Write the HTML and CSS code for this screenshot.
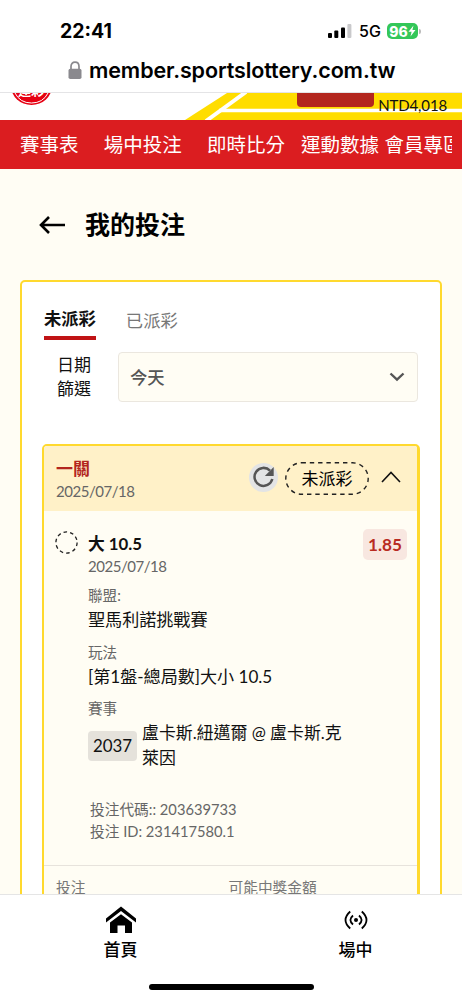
FILE: index.html
```html
<!DOCTYPE html>
<html lang="zh-Hant">
<head>
<meta charset="utf-8">
<meta name="viewport" content="width=device-width, initial-scale=1">
<title>我的投注</title>
<link rel="stylesheet" href="styles.css">
</head>
<body>
<div class="phone">
  <header class="browser">
    <div class="status">
      <span class="time">22:41</span>
      <span class="status-right">
        <svg class="signal" width="24" height="15" viewBox="0 0 24 15"><rect x="0" y="9" width="4" height="5" rx="1"/><rect x="6.3" y="6.5" width="4" height="7.5" rx="1"/><rect x="13" y="3.5" width="4" height="10.500" rx="1"/><rect x="19.400" y="0" width="4" height="14" rx="1" fill="#c9c9cb"/></svg>
        <span class="net">5G</span>
        <span class="battery">96<svg width="8" height="12" viewBox="0 0 8 12"><path d="M5.500 0.500L0.500 6.800H3.600L2.500 11.500L7.500 5H4.400Z" fill="#fff"/></svg></span>
        <span class="battery-tip"></span>
      </span>
    </div>
    <div class="address">
      <svg width="14" height="19" viewBox="0 0 14 19"><path d="M3 9V5.500C3 2.800 4.600 1.200 7 1.200S11 2.800 11 5.500V9" fill="none" stroke="#8a898e" stroke-width="1.700"/><rect x="0.500" y="7.800" width="13" height="10.200" rx="1.800" fill="#8a898e"/></svg>
      <span>member.sportslottery.com.tw</span>
    </div>
  </header>

  <div class="banner">
    <svg class="banner-art" width="462" height="27" viewBox="0 0 462 27">
      <path d="M227 0H462V27H185Z" fill="#ffdd00"/>
      <path d="M246 -1L206 28" stroke="#fff" stroke-width="4"/>
      <path d="M219 17.500H462" stroke="#fff" stroke-width="3.500"/>
      <path d="M297 0H374V10Q374 14 370 14H301Q297 14 297 10Z" fill="#b3261e"/>
      <ellipse cx="31.500" cy="-7" rx="20.500" ry="19" fill="#e60012"/>
      <path d="M15 0Q20 10 31.500 10Q43 10 48 0" fill="none" stroke="#fff" stroke-width="1"/>
    </svg>
    <span class="logo-text">運彩</span>
    <span class="balance">NTD4,018</span>
  </div>

  <nav class="nav"><span>賽事表</span><span>場中投注</span><span>即時比分</span><span>運動數據</span><span>會員專區</span></nav>

  <main class="page">
    <div class="title-row">
      <svg width="28" height="20" viewBox="0 0 28 20"><path d="M26 10H2.500M10 2L2 10L10 18" fill="none" stroke="#000" stroke-width="2.600"/></svg>
      <h1>我的投注</h1>
    </div>

    <section class="panel">
      <div class="tabs"><span class="tab active">未派彩</span><span class="tab">已派彩</span></div>
      <div class="filter">
        <div class="filter-label">日期<br>篩選</div>
        <div class="select"><span>今天</span><svg width="16" height="10" viewBox="0 0 16 10"><path d="M1.500 1.500L8 7.700L14.500 1.500" fill="none" stroke="#555" stroke-width="2.400"/></svg></div>
      </div>

      <article class="ticket">
        <div class="ticket-head">
          <div class="ticket-name"><strong>一關</strong><span class="day">2025/07/18</span></div>
          <span class="refresh"><svg width="22" height="22" viewBox="0 0 22 22"><path d="M19.300 13A9 9 0 1 1 17 4.600" fill="none" stroke="#555" stroke-width="2.500"/><path d="M20.700 1V10H11.800Z" fill="#555"/></svg></span>
          <svg class="pill" width="84" height="33" viewBox="0 0 84 33"><rect x="0.800" y="0.800" width="82.400" height="31.400" rx="15.700" fill="none" stroke="#222" stroke-width="1.400" stroke-dasharray="4.400 3.900"/><text x="42" y="22.500" text-anchor="middle">未派彩</text></svg>
          <svg class="collapse" width="20" height="12" viewBox="0 0 20 12"><path d="M1 11L10 1.500L19 11" fill="none" stroke="#111" stroke-width="1.600"/></svg>
        </div>

        <div class="bet">
          <svg class="pending" width="23" height="23" viewBox="0 0 23 23"><circle cx="11.500" cy="11.500" r="10.600" fill="none" stroke="#222" stroke-width="1.300" stroke-dasharray="3.600 3.060"/></svg>
          <div class="bet-info">
            <div class="pick">大 10.5</div>
            <div class="muted date day">2025/07/18</div>
            <div class="muted label">聯盟:</div>
            <div class="value">聖馬利諾挑戰賽</div>
            <div class="muted label">玩法</div>
            <div class="value">[第1盤-總局數]大小 10.5</div>
            <div class="muted label">賽事</div>
            <div class="match"><span class="code">2037</span><span>盧卡斯.紐邁爾 @ 盧卡斯.克<br>萊因</span></div>
            <div class="muted ids">投注代碼:: 203639733<br>投注 ID: 231417580.1</div>
          </div>
          <span class="odds">1.85</span>
        </div>
        <div class="totals"><span>投注</span><span>可能中獎金額</span></div>
      </article>
    </section>
  </main>

  <footer class="tabbar">
    <div class="tabbar-items">
      <div class="item"><svg width="32" height="28" viewBox="0 0 32 28"><path d="M1 12.500L16 0.500L31 12.500V16.500L16 5L1 16.500Z"/><path d="M5 16.500L16 8.200L27 16.500V27H20V19.500H12.500V27H5Z"/></svg><span>首頁</span></div>
      <div class="item"><svg width="24" height="28" viewBox="0 0 24 28"><g fill="none" stroke="#000" stroke-width="1.800"><path d="M6.200 5.500Q-3.200 14 6.200 22.500M17.800 5.500Q27.200 14 17.800 22.500"/><path d="M9 9.500Q3.800 14 9 18.500M15 9.500Q20.200 14 15 18.500"/></g><circle cx="12" cy="14" r="2"/></svg><span>場中</span></div>
    </div>
    <div class="home-bar"></div>
  </footer>
</div>
</body>
</html>
```
FILE: styles.css
```css
* { box-sizing: border-box; }
body { margin: 0; }
.phone {
  width: 462px; height: 1000px; overflow: hidden;
  display: flex; flex-direction: column;
  background: #fffdf4; color: #111;
  font-family: Lato, "Noto Sans CJK TC", sans-serif;
}
.phone svg { display: block; flex: none; }

.browser { display: flex; flex-direction: column; height: 93px; flex: none; background: #fff; border-bottom: 1px solid #e4e4e6; font-family: Inter, sans-serif; color: #000; }
.status { display: flex; justify-content: space-between; align-items: center; height: 30px; margin-top: 16px; padding: 0 41px 0 60px; }
.time { font-size: 19.5px; font-weight: 700; }
.status-right { display: flex; align-items: center; }
.net { font-size: 16px; font-weight: 500; margin-left: 7px; width: 28px; }
.battery { display: flex; align-items: center; justify-content: center; width: 31px; height: 16px; border-radius: 5px; background: #34c759; color: #fff; font-size: 14px; font-weight: 800; }
.battery-tip { width: 2px; height: 5px; margin-left: 1px; border-radius: 0 2px 2px 0; background: #bbb; }
.address { display: flex; align-items: center; gap: 7px; height: 34px; margin-top: 7px; padding-left: 68px; font-size: 21.5px; font-weight: 600; letter-spacing: -0.1px; white-space: nowrap; }
.address span { margin-top: -1px; }

.banner { position: relative; height: 27px; flex: none; background: #fff; overflow: hidden; }
.logo-text { position: absolute; left: 18px; top: -12px; color: #fff; font-size: 13px; line-height: 18px; font-weight: 700; }
.balance { position: absolute; right: 15px; top: 2px; font-size: 15px; line-height: 20px; letter-spacing: -0.15px; }

.nav { display: flex; flex: none; height: 49px; line-height: 49px; padding-left: 20px; background: #db1d20; border-right: 10px solid #db1d20; color: #fff; font-size: 19.5px; white-space: nowrap; overflow: hidden; }
.nav span { flex: none; }
.nav span + span { margin-left: 25.2px; }
.nav span:nth-child(4) { margin-left: 16px; }
.nav span:nth-child(5) { margin-left: 5.5px; }

.page { flex: 1; min-height: 0; overflow: hidden; }
.title-row { display: flex; align-items: center; gap: 18px; height: 111px; padding-left: 39px; }
h1 { margin: -1px 0 0; font-size: 25px; line-height: 36px; font-weight: 700; color: #000; }
.panel { margin: 0 20px; height: 900px; padding: 24px 20px 0; background: #fff; border: 2px solid #ffd92e; border-radius: 5px; }

.tabs { display: flex; gap: 30px; height: 36px; padding-left: 2px; font-size: 17.3px; }
.tab { color: #777; padding-top: 3px; line-height: 24px; }
.tab.active { height: 34px; padding-top: 1px; color: #111; font-weight: 700; border-bottom: 4px solid #c01315; }
.filter { display: flex; align-items: center; height: 50px; margin-top: 10px; }
.filter-label { width: 76px; padding-left: 15px; font-size: 17px; line-height: 24.500px; }
.select { width: 300px; height: 50px; display: flex; align-items: center; justify-content: space-between; padding: 0 12px 0 11px; border: 1.500px solid #ebe7df; border-radius: 4px; background: #fffdf4; color: #555; font-size: 17.3px; font-weight: 500; }
.select span { margin-top: -2px; }

.ticket { width: 378px; height: 700px; margin-top: 42px; border: 2px solid #ffd92e; border-right-width: 3px; border-radius: 5px; background: #fffdf4; overflow: hidden; }
.ticket-head { display: flex; align-items: center; height: 65px; padding: 0 16px 0 12px; background: #fff1c8; }
.ticket-name { display: flex; flex: none; flex-direction: column; width: 193px; color: #666; line-height: 20px; }
.ticket-name strong { color: #b3261e; font-size: 17px; line-height: 23px; }
.ticket-name .day { margin-top: 1px; }
.day { font-size: 15px; letter-spacing: -0.46px; }
.refresh { display: flex; flex: none; align-items: center; justify-content: center; width: 29px; height: 29px; margin-top: -3px; border-radius: 50%; background: #e3e4e5; }
.pill { margin-left: 7px; font-size: 17px; }
.collapse { margin: -3px 0 0 12px; }

.bet { display: flex; height: 354px; padding: 18px 10px 0 11px; }
.pending { margin-top: 2px; }
.bet-info { flex: 1; padding: 2px 0 0 10px; white-space: nowrap; font-size: 17px; }
.muted { color: #666; font-size: 14.600px; }
.pick { font-size: 16.8px; line-height: 26px; font-weight: 700; }
.date { font-size: 15px; line-height: 20px; margin-top: -1px; }
.label { line-height: 22px; margin-top: 8px; }
.date + .label { margin-top: 9px; }
.value { line-height: 26.500px; font-size: 17.1px; letter-spacing: -0.02px; }
.match { display: flex; align-items: center; gap: 5px; margin-top: 1px; line-height: 24.500px; font-size: 16.9px; }
.code { width: 49px; height: 30px; line-height: 30px; text-align: center; border-radius: 4px; background: #e5e2db; }
.ids { margin: 28px 0 0 2px; line-height: 22px; font-size: 14.700px; }
.odds { flex: none; margin-left: -44px; width: 44px; height: 31px; line-height: 32px; text-align: center; border-radius: 5px; background: #f8e7e0; color: #b92b22; font-size: 17.2px; font-weight: 700; }
.totals { display: flex; border-top: 1.500px solid #e7e3dc; padding: 10px 12px; font-size: 14.700px; line-height: 22px; color: #777; }
.totals span:first-child { width: 172.5px; }

.tabbar { flex: none; height: 106px; background: #fff; border-top: 1px solid #e5e5e5; }
.tabbar-items { display: flex; height: 92px; padding: 11px 0 0 3px; }
.item { flex: none; width: 235px; display: flex; flex-direction: column; align-items: center; font-size: 17px; line-height: 26px; font-weight: 500; color: #000; }
.item span { margin-top: 3px; }
.home-bar { width: 165px; height: 6px; margin: -3px auto 0; border-radius: 3px; background: #000; }
```
